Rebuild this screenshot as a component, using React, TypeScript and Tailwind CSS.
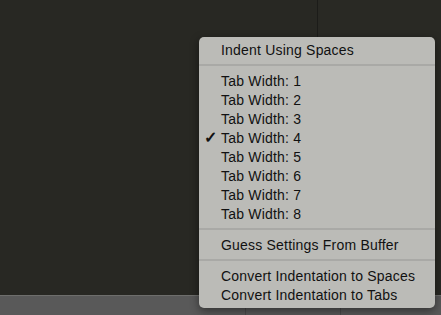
import React from 'react';

type Item = { label: string; checked?: boolean } | 'sep';

const items: Item[] = [
  { label: 'Indent Using Spaces' },
  'sep',
  { label: 'Tab Width: 1' },
  { label: 'Tab Width: 2' },
  { label: 'Tab Width: 3' },
  { label: 'Tab Width: 4', checked: true },
  { label: 'Tab Width: 5' },
  { label: 'Tab Width: 6' },
  { label: 'Tab Width: 7' },
  { label: 'Tab Width: 8' },
  'sep',
  { label: 'Guess Settings From Buffer' },
  'sep',
  { label: 'Convert Indentation to Spaces' },
  { label: 'Convert Indentation to Tabs' },
];

const App: React.FC = () => {
  return (
    <div
      className="relative w-[441px] h-[315px] overflow-hidden bg-[#282823] flex flex-col"
      style={{ fontFamily: '"Liberation Sans", Arial, sans-serif' }}
    >
      {/* editor panes */}
      <div className="flex flex-1">
        <div className="w-[318px] border-r border-[#1c1c19]" />
        <div className="flex-1 bg-[#292924]" />
      </div>

      <div className="h-[20px] flex border-t border-[#6e6e6c] bg-[#595959]">
        <div className="w-[246px] border-r border-[#4a4a4a]" />
        <div className="w-[95px] border-r border-[#4a4a4a]" />
        <div className="flex-1" />
      </div>

      {/* indentation menu */}
      <div className="absolute left-[199px] top-[37px] w-[236px] rounded-[5px] bg-[#bbbbb7] pt-[3px] pb-[4px] text-[14px] tracking-[0.2px] text-[#111111] shadow-[0_3px_10px_rgba(0,0,0,0.45)]">
        {items.map((item, i) =>
          item === 'sep' ? (
            <div key={i} className="h-[12px] flex items-center">
              <div className="w-full h-[2px] bg-[#a9a9a6]" />
            </div>
          ) : (
            <div key={i} className="h-[19px] flex items-center">
              <span className="w-[22px] pl-[5px] text-[16px] font-bold leading-none">
                {item.checked ? '✓' : ''}
              </span>
              <span className="leading-none">{item.label}</span>
            </div>
          )
        )}
      </div>
    </div>
  );
};

export default App;
